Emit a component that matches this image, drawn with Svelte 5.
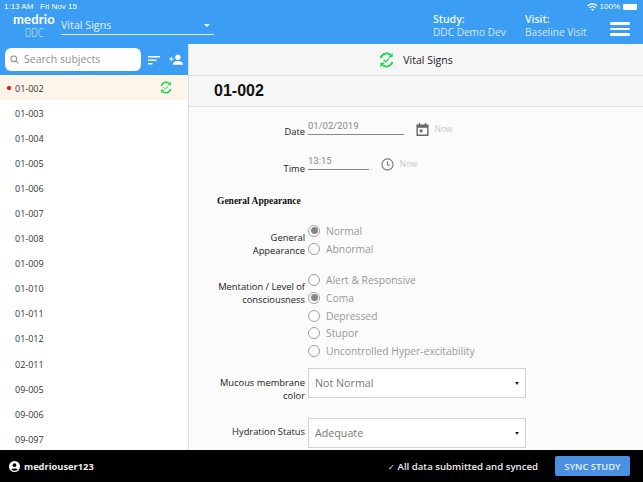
<script>
  const subjects = ['01-003','01-004','01-005','01-006','01-007','01-008','01-009','01-010','01-011','01-012','02-011','09-005','09-006','09-097'];
  const gen = [['Normal', true], ['Abnormal', false]];
  const ment = [['Alert & Responsive', false], ['Coma', true], ['Depressed', false], ['Stupor', false], ['Uncontrolled Hyper-excitability', false]];
</script>

{#snippet syncIcon(w, h, cls)}
  <svg class={cls} width={w} height={h} viewBox="0 0 16 17" fill="none" stroke="#14d84f" stroke-width="2">
    <path d="M1.800 6.500A6.500 6.500 0 0 1 12 2.800"/>
    <path d="M14.200 10.500A6.500 6.500 0 0 1 4 14.200"/>
    <path d="M14.500 .8v4.700H9.800z" fill="#14d84f" stroke="none"/>
    <path d="M1.500 16.200v-4.700h4.700z" fill="#14d84f" stroke="none"/>
    <path d="M5 8.300l2.200 2.200L11 6.800" stroke-width="1.300"/>
  </svg>
{/snippet}

<div class="app">
  <header class="top">
    <div class="status">
      <span>1:13 AM&nbsp;&nbsp; Fri Nov 15</span>
      <span class="status-right">
        <svg width="11" height="8" viewBox="0 0 22 16" fill="none" stroke="#fff" stroke-width="2.600"><path d="M1.500 5.500a14 14 0 0 1 19 0M5 9.500a9 9 0 0 1 12 0"/><path d="M8 13a4.500 4.500 0 0 1 6 0l-3 3z" fill="#fff" stroke="none"/></svg>
        <span>100%</span>
        <span class="battery"></span>
      </span>
    </div>
    <div class="navrow">
      <div class="logo"><span class="logo-a">medrio</span><span class="logo-b">DDC</span></div>
      <div class="form-select"><span>Vital Signs</span><i class="caret"></i></div>
      <div class="meta study"><b>Study:</b><span>DDC Demo Dev</span></div>
      <div class="meta visit"><b>Visit:</b><span>Baseline Visit</span></div>
      <div class="burger"><i></i><i></i><i></i></div>
    </div>
  </header>

  <div class="main">
    <aside class="side">
      <div class="searchbar">
        <div class="search">
          <svg width="9" height="9" viewBox="0 0 12 12" fill="none" stroke="#8e8e8e" stroke-width="1.400"><circle cx="5" cy="5" r="3.800"/><path d="M8 8l3.400 3.400"/></svg>
          <span>Search subjects</span>
        </div>
        <svg class="sort" width="12" height="9" viewBox="0 0 12 9" fill="#fff"><rect width="12" height="1.500"/><rect y="3.500" width="8.500" height="1.500"/><rect y="7" width="4.500" height="1.500"/></svg>
        <svg class="addp" width="14" height="11" viewBox="0 0 15 11" fill="#fff"><circle cx="9.500" cy="3" r="2.800"/><path d="M4 11c0-3 3-4 5.500-4s5.500 1 5.500 4z"/><path d="M0 4.500h2v-2h1v2h2v1H3v2H2v-2H0z"/></svg>
      </div>
      <ul class="list">
        <li class="active">
          <i class="dot"></i><span>01-002</span>
          {@render syncIcon(12, 13, 'sync')}
        </li>
        {#each subjects as s}
          <li><span>{s}</span></li>
        {/each}
      </ul>
    </aside>

    <section class="content">
      <div class="title-bar">
        {@render syncIcon(15, 16, 'tsync')}
        <span>Vital Signs</span>
      </div>
      <div class="subject-bar">01-002</div>
      <div class="form">
        <div class="row date-row">
          <span class="lbl">Date</span>
          <div class="underline date">01/02/2019</div>
          <svg class="ic" width="13" height="13" viewBox="0 0 14 14" fill="#666"><path d="M3 0h1.500v1.500h5V0H11v1.500h2.500V14H.5V1.500H3zM2 5v7.500h10V5z"/><rect x="4" y="7" width="3" height="3"/></svg>
          <span class="now">Now</span>
        </div>
        <div class="row time-row">
          <span class="lbl">Time</span>
          <div class="underline time">13:15</div>
          <svg class="ic" width="13" height="13" viewBox="0 0 14 14" fill="none" stroke="#777" stroke-width="1.200"><circle cx="7" cy="7" r="6"/><path d="M7 3.500V7l2.500 1.500"/></svg>
          <span class="now">Now</span>
        </div>
        <h3>General Appearance</h3>
        <div class="group g1">
          <span class="lbl">General<br>Appearance</span>
          <div class="radios">
            {#each gen as [t, on]}
              <div class="radio"><i class:on></i><span>{t}</span></div>
            {/each}
          </div>
        </div>
        <div class="group g2">
          <span class="lbl">Mentation / Level of<br>consciousness</span>
          <div class="radios">
            {#each ment as [t, on]}
              <div class="radio"><i class:on></i><span>{t}</span></div>
            {/each}
          </div>
        </div>
        <div class="group sel1">
          <span class="lbl">Mucous membrane<br>color</span>
          <div class="select"><span>Not Normal</span><i></i></div>
        </div>
        <div class="group sel2">
          <span class="lbl">Hydration Status</span>
          <div class="select"><span>Adequate</span><i></i></div>
        </div>
      </div>
    </section>
  </div>

  <footer class="foot">
    <svg width="11" height="11" viewBox="0 0 12 12"><circle cx="6" cy="6" r="6" fill="#fff"/><circle cx="6" cy="4.500" r="2" fill="#000"/><path d="M2.500 9.500c1-1.800 6-1.800 7 0-1.800 1.600-5.200 1.600-7 0z" fill="#000"/></svg>
    <b class="user">medriouser123</b>
    <span class="synced"><em>✓</em> All data submitted and synced</span>
    <div class="btn">SYNC STUDY</div>
  </footer>
</div>

<style>
  :global(body) { margin: 0; }
  .app { width: 643px; height: 482px; display: flex; flex-direction: column; overflow: hidden; font-family: "Open Sans", sans-serif; background: #fff; color: #222; }
  .top { height: 44px; background: #3b9df3; color: #fff; flex: none; position: relative; }
  .status { display: flex; justify-content: space-between; height: 13px; padding: 0 6px 0 4px; font: 8px/13px "Liberation Sans", sans-serif; color: #fff; }
  .status-right { display: flex; align-items: center; gap: 2px; }
  .battery { width: 14px; height: 6px; background: #fff; border-radius: 1px; margin-left: 1px; }
  .navrow { display: flex; align-items: flex-start; height: 31px; }
  .logo { width: 61px; display: flex; flex-direction: column; align-items: center; padding-left: 5px; box-sizing: border-box; }
  .logo-a { font: 700 13px/13px Lato, sans-serif; letter-spacing: .2px; margin-left: 2px; }
  .logo-b { font: 300 13px/12px "Open Sans", sans-serif; color: #d6eafc; margin-left: 3px; transform: scaleX(.72); }
  .form-select { width: 153px; height: 21px; border-bottom: 1.500px solid #dcecfb; display: flex; align-items: center; justify-content: space-between; font-size: 10.700px; color: #e6f2fd; padding: 2px 4px 0 0; box-sizing: border-box; margin-top: 1px; }
  .caret { width: 0; height: 0; border: 3px solid transparent; border-top: 3.500px solid #fff; border-bottom: 0; }
  .meta { display: flex; flex-direction: column; font-size: 10.100px; line-height: 13px; color: #d4e8fb; }
  .meta b { font-weight: 600; color: #eef6fe; font-size: 10.500px; }
  .study { margin-left: 219px; width: 92px; }
  .visit { width: 85px; }
  .burger { display: flex; flex-direction: column; gap: 3px; margin-top: 9px; }
  .burger i { display: block; width: 20px; height: 2.500px; background: #fff; border-radius: 1px; }

  .main { flex: 1; display: flex; min-height: 0; }
  .side { width: 189px; flex: none; border-right: 1px solid #dedede; box-sizing: border-box; display: flex; flex-direction: column; }
  .searchbar { height: 31px; background: #3b9df3; display: flex; align-items: flex-start; flex: none; }
  .search { width: 136px; height: 23px; margin: 4px 0 0 5px; padding: 0 0 1px 5px; background: #fff; border-radius: 6px; display: flex; align-items: center; gap: 5px; box-sizing: border-box; font-size: 10.500px; color: #8f8f8f; }
  .sort { margin: 12px 0 0 7px; }
  .addp { margin: 10px 0 0 9px; }
  .list { list-style: none; margin: 0; padding: 0; flex: 1; }
  .list li { height: 25.100px; padding: 1px 0 0 15px; box-sizing: border-box; display: flex; align-items: center; font-size: 9px; color: #333; position: relative; }
  .list li.active { background: #fdf4ea; }
  .dot { position: absolute; left: 7px; top: 11px; width: 3.500px; height: 3.500px; border-radius: 50%; background: #f01010; }
  :global(.sync) { position: absolute; left: 160px; top: 6px; }

  .content { flex: 1; background: #fbfbfb; display: flex; flex-direction: column; min-width: 0; }
  .title-bar { height: 31px; background: #f6f6f6; border-bottom: 1px solid #dedede; display: flex; align-items: center; justify-content: center; gap: 9px; font-size: 10.500px; color: #222; flex: none; }
  .subject-bar { height: 30px; background: #f6f6f6; border-bottom: 1px solid #dedede; padding-left: 25px; font: 700 16px/30px "Liberation Sans", sans-serif; color: #111; flex: none; }
  .form { flex: 1; position: relative; font-size: 10px; }
  .lbl { display: block; text-align: right; color: #222; font-size: 9.350px; line-height: 13px; width: 116px; flex: none; }
  .row, .group { display: flex; }
  .row { align-items: flex-start; }
  .date-row { margin-top: 10px; height: 24px; }
  .time-row { margin-top: 11px; height: 24px; }
  .row .lbl { padding-top: 8px; }
  .time-row .lbl { padding-top: 10px; }
  .underline { margin-left: 3px; padding-top: 1px; border-bottom: 1.500px solid #888; font: 9.500px/13px Roboto, sans-serif; color: #888; box-sizing: border-box; height: 17px; margin-top: 1px; }
  .date { width: 96px; }
  .time { width: 61px; }
  .ic { margin-left: 12px; margin-top: 6px; }
  .now { margin-left: 5.500px; font-size: 8.500px; color: #c9c9c9; line-height: 14px; margin-top: 5px; }
  h3 { margin: 19px 0 0 28px; font: 700 9.500px/12px "Liberation Serif", serif; color: #111; height: 12px; }
  .g1 { margin-top: 15px; }
  .g1 .lbl { padding-top: 8.500px; }
  .g2 { margin-top: 13px; }
  .g2 .lbl { padding-top: 9px; }
  .radios { display: flex; flex-direction: column; margin-left: 3px; }
  .radio { height: 17.900px; display: flex; align-items: center; gap: 6px; font-size: 10.300px; color: #999; }
  .radio i { width: 12px; height: 12px; box-sizing: border-box; border-radius: 50%; border: 1px solid #a0a0a0; position: relative; background: #fff; }
  .radio i.on::after { content: ""; position: absolute; inset: 1.500px; border-radius: 50%; background: #858585; }
  .sel1 { margin-top: 8px; height: 30px; align-items: center; }
  .sel1 .lbl { padding-top: 12px; }
  .sel2 { margin-top: 20px; height: 30px; align-items: center; }
  .sel2 .lbl { padding-bottom: 4px; }
  .select { margin-left: 3px; width: 218px; height: 30px; box-sizing: border-box; border: 1.500px solid #d2d2d2; background: #fff; display: flex; align-items: center; justify-content: space-between; padding: 0 6px; font-size: 10.700px; color: #777; }
  .select i { width: 0; height: 0; border: 2px solid transparent; border-top: 3px solid #222; border-bottom: 0; }

  .foot { height: 32px; background: #000; color: #fff; flex: none; display: flex; align-items: center; padding-left: 9px; box-sizing: border-box; }
  .user { margin-left: 4px; font-size: 9.300px; font-weight: 700; color: #eee; }
  .synced { margin-left: auto; font-size: 9.650px; font-weight: 600; color: #eee; }
  .synced em { font-style: normal; font-weight: 400; font-size: 8px; }
  .btn { margin: 0 13px 0 17px; width: 75px; height: 20px; background: #4a90e2; border-radius: 2px; display: flex; align-items: center; justify-content: center; font-size: 9.400px; font-weight: 600; color: #e8f1fc; }
</style>
